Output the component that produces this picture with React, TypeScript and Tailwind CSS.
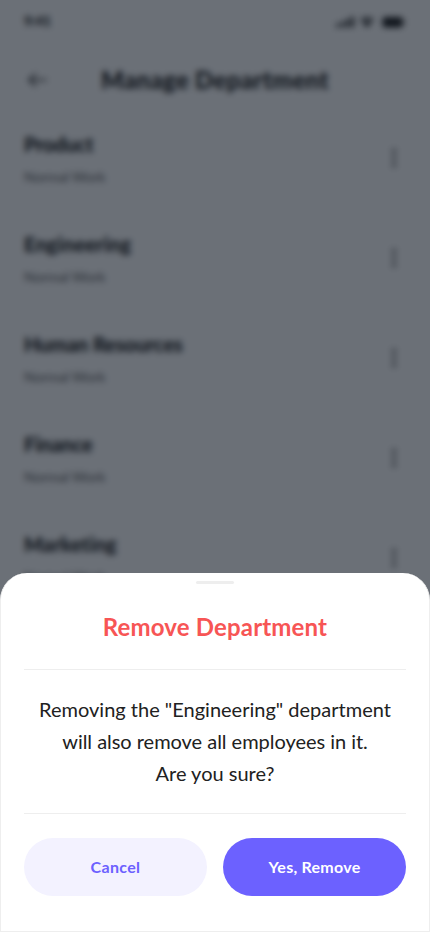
import React from "react";

const departments = [
  { name: "Product", tracking: "tracking-[-0.3px]" },
  { name: "Engineering", tracking: "tracking-[0.12px]" },
  { name: "Human Resources", tracking: "tracking-[-0.15px]" },
  { name: "Finance", tracking: "tracking-[-0.15px]" },
  { name: "Marketing", tracking: "tracking-[0.05px]" },
];

function StatusBar() {
  return (
    <div className="flex h-11 items-center justify-between pl-6 pr-[25px]">
      <span className="-mt-0.5 text-[14px] font-black leading-none tracking-[-0.3px]">9:41</span>
      <svg className="h-3 w-[69px]" viewBox="0 0 69 12" fill="currentColor">
        <rect x="0" y="7.5" width="3" height="4" rx="0.8" />
        <rect x="5" y="5.5" width="3" height="6" rx="0.8" />
        <rect x="10" y="3" width="3" height="8.5" rx="0.8" />
        <rect x="15" y="0.5" width="3" height="11" rx="0.8" />
        <path d="M24 3.6a11 11 0 0 1 14 0l-1.4 1.8a9 9 0 0 0-11.2 0zM26.5 6.8a7 7 0 0 1 9 0L31 11.5z" />
        <rect x="46.5" y="1" width="20" height="10.5" rx="2.5" />
        <rect x="67.5" y="4.3" width="1.3" height="4" rx="0.6" />
      </svg>
    </div>
  );
}

function DepartmentRow({ name, tracking }: { name: string; tracking: string }) {
  return (
    <div className="flex h-[100px] items-start justify-between pl-6 pr-[34px]">
      <div>
        <h2 className={`text-[20px] font-black leading-6 ${tracking}`}>{name}</h2>
        <p className="mt-[11px] text-[14px] leading-5 tracking-[-0.08px] text-[#616161]">Normal Work</p>
      </div>
      <svg className="mt-[17px] h-[18px] w-1" viewBox="0 0 4 18" fill="#424242">
        <circle cx="2" cy="2" r="1.9" />
        <circle cx="2" cy="9" r="1.9" />
        <circle cx="2" cy="16" r="1.9" />
      </svg>
    </div>
  );
}

export default function App() {
  return (
    <div className="relative h-[932px] w-[430px] overflow-hidden bg-white font-['Lato','Open_Sans',sans-serif] text-[#212121]">
      <main className="h-full overflow-hidden bg-white">
        <StatusBar />
        <header className="relative flex h-[72px] items-center justify-center">
          <svg className="absolute left-[28px] top-[29px] h-[14px] w-[19px]" viewBox="0 0 19 14" fill="none" stroke="currentColor" strokeWidth="1.7" strokeLinecap="round" strokeLinejoin="round">
            <path d="M18 7H1M7.5 1 1 7l6.500 6" />
          </svg>
          <h1 className="text-[24px] font-black leading-8 tracking-[0.32px]">Manage Department</h1>
        </header>
        <div className="pt-4">
          {departments.map((department) => (
            <DepartmentRow key={department.name} {...department} />
          ))}
        </div>
      </main>

      <div className="absolute inset-0 flex flex-col justify-end bg-[#09101d]/60 backdrop-blur-[3px]">
        <section className="flex h-[359px] flex-col rounded-t-[27px] border border-t-0 border-[#eeeeee] bg-white px-[23px]">
          <div className="mx-auto mt-2 h-[3px] w-[38px] shrink-0 rounded-full bg-[#eeeeee]" />
          <h2 className="mt-[27px] text-center text-[24px] font-bold leading-8 tracking-[0.16px] text-[#f75555]">Remove Department</h2>
          <hr className="mt-[26px] border-[#eeeeee]" />
          <div className="mt-[23px] whitespace-nowrap text-center text-[20px] leading-8">
            <p>Removing the "Engineering" department</p>
            <p className="tracking-[-0.03px]">will also remove all employees in it.</p>
            <p>Are you sure?</p>
          </div>
          <hr className="mt-6 border-[#eeeeee]" />
          <div className="mt-6 flex gap-4">
            <button className="h-[58px] flex-1 rounded-full bg-[#f3f2ff] text-[16px] font-bold tracking-[0.35px] text-[#6c61ff]">Cancel</button>
            <button className="h-[58px] flex-1 rounded-full bg-[#6c61ff] text-[16px] font-bold tracking-[0.25px] text-white">Yes, Remove</button>
          </div>
        </section>
      </div>
    </div>
  );
}
